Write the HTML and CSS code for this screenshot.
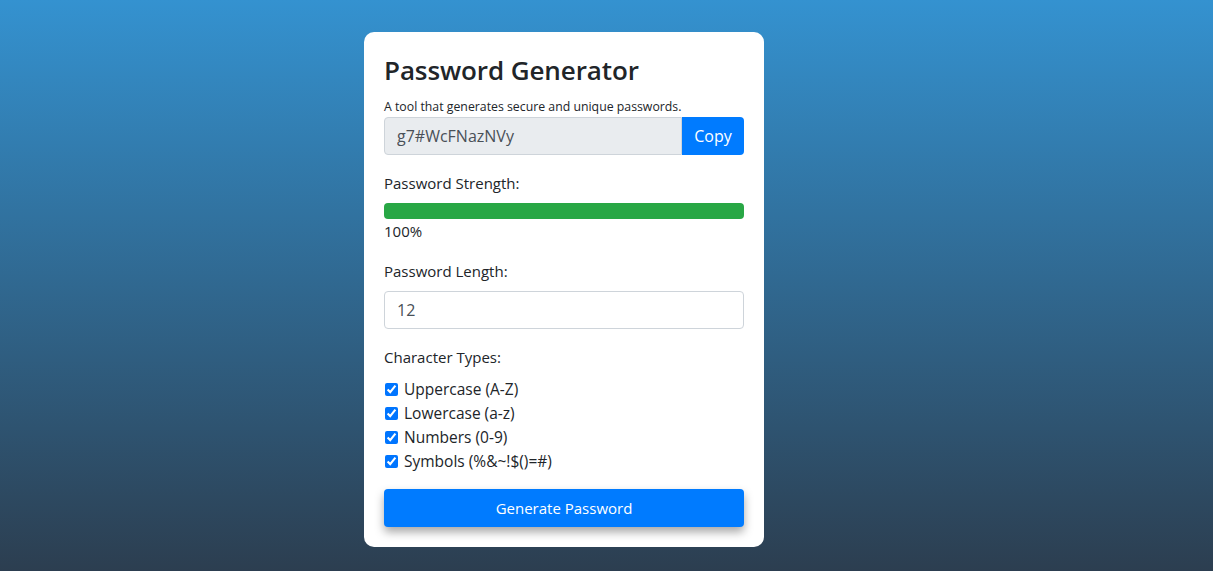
FILE: index.html
```html
<!doctype html>
<html lang="en">
  <head>
    <meta charset="utf-8">
    <meta name="viewport" content="width=device-width,initial-scale=1">
    <title>Password Generator</title>
    <link rel="stylesheet" href="styles.css">
  </head>

  <body>
    <main class="card">
      <h1>Password Generator</h1>
      <p class="lead"><small>A tool that generates secure and unique passwords.</small></p>

      <div class="input-group">
        <input class="field" type="text" value="g7#WcFNazNVy" readonly>
        <button class="btn copy" type="button">Copy</button>
      </div>

      <section class="group">
        <label>Password Strength:</label>
        <div class="progress">
          <div class="bar" style="width: 100%"></div>
        </div>
        <span class="percent">100%</span>
      </section>

      <section class="group">
        <label for="length">Password Length:</label>
        <input class="field length" id="length" type="number" value="12">
      </section>

      <section class="group">
        <label>Character Types:</label>
        <ul class="checks">
          <li><input type="checkbox" id="upper" checked><label for="upper">Uppercase (A-Z)</label></li>
          <li><input type="checkbox" id="lower" checked><label for="lower">Lowercase (a-z)</label></li>
          <li><input type="checkbox" id="numbers" checked><label for="numbers">Numbers (0-9)</label></li>
          <li><input type="checkbox" id="symbols" checked><label for="symbols">Symbols (%&amp;~!$()=#)</label></li>
        </ul>
      </section>

      <button class="btn generate" type="button">Generate Password</button>
    </main>
  </body>
</html>
```

FILE: styles.css
```css
html {
  height: 100%;
}

body, input, button {
  font-family: "Open Sans", "Noto Sans", sans-serif;
  font-size: 16px;
  -webkit-font-smoothing: antialiased;
}

body {
  margin: 0;
  padding-right: 85px;
  min-height: 100%;
  color: #212529;
  background: linear-gradient(#3492d0, #2c3e50);
  display: flex;
  justify-content: center;
  align-items: flex-start;
  line-height: 1.5;
}

.card {
  width: 360px;
  margin-top: 32px;
  padding: 20px;
  background: #fff;
  border-radius: 10px;
}

h1 {
  margin: 0 0 9px;
  font-size: 26px;
  font-weight: 600;
  line-height: 36px;
  letter-spacing: -0.1px;
}

.lead {
  margin: 0 0 2px;
  line-height: 16px;
}

.lead small {
  font-size: 12.3px;
}

.input-group {
  display: flex;
}

.field {
  box-sizing: border-box;
  height: 38px;
  padding: 6px 12px;
  border: 1px solid #ced4da;
  border-radius: 4px;
  color: #495057;
  background: #fff;
  outline: none;
}

.input-group .field {
  flex: 1;
  min-width: 0;
  background: #e9ecef;
  border-radius: 4px 0 0 4px;
}

.btn {
  height: 38px;
  border: 0;
  color: #fff;
  background: #007bff;
  cursor: pointer;
}

.copy {
  width: 62px;
  padding: 0;
  border-radius: 0 4px 4px 0;
  font-size: 16px;
}

.group {
  margin-top: 17px;
}

.group > label {
  display: block;
  margin-bottom: 8px;
  font-size: 15px;
}

.group > label[for] {
  margin-bottom: 9px;
}

.progress {
  height: 16px;
  border-radius: 4px;
  background: #e9ecef;
  overflow: hidden;
}

.bar {
  height: 100%;
  background: #28a745;
}

.percent {
  display: block;
  font-size: 15px;
  line-height: 24px;
}

.length {
  width: 100%;
}

.checks {
  list-style: none;
  margin: 9px 0 0;
  padding: 0;
}

.checks li {
  display: flex;
  align-items: center;
  height: 24px;
  font-size: 15.5px;
}

.checks input {
  width: 13px;
  height: 13px;
  margin: 0 6px 0 1px;
  accent-color: #0075ff;
}

.generate {
  display: block;
  width: 100%;
  margin-top: 15px;
  border-radius: 4px;
  font-size: 15px;
  box-shadow: 0 5px 10px rgba(0, 0, 0, 0.35);
}
```
